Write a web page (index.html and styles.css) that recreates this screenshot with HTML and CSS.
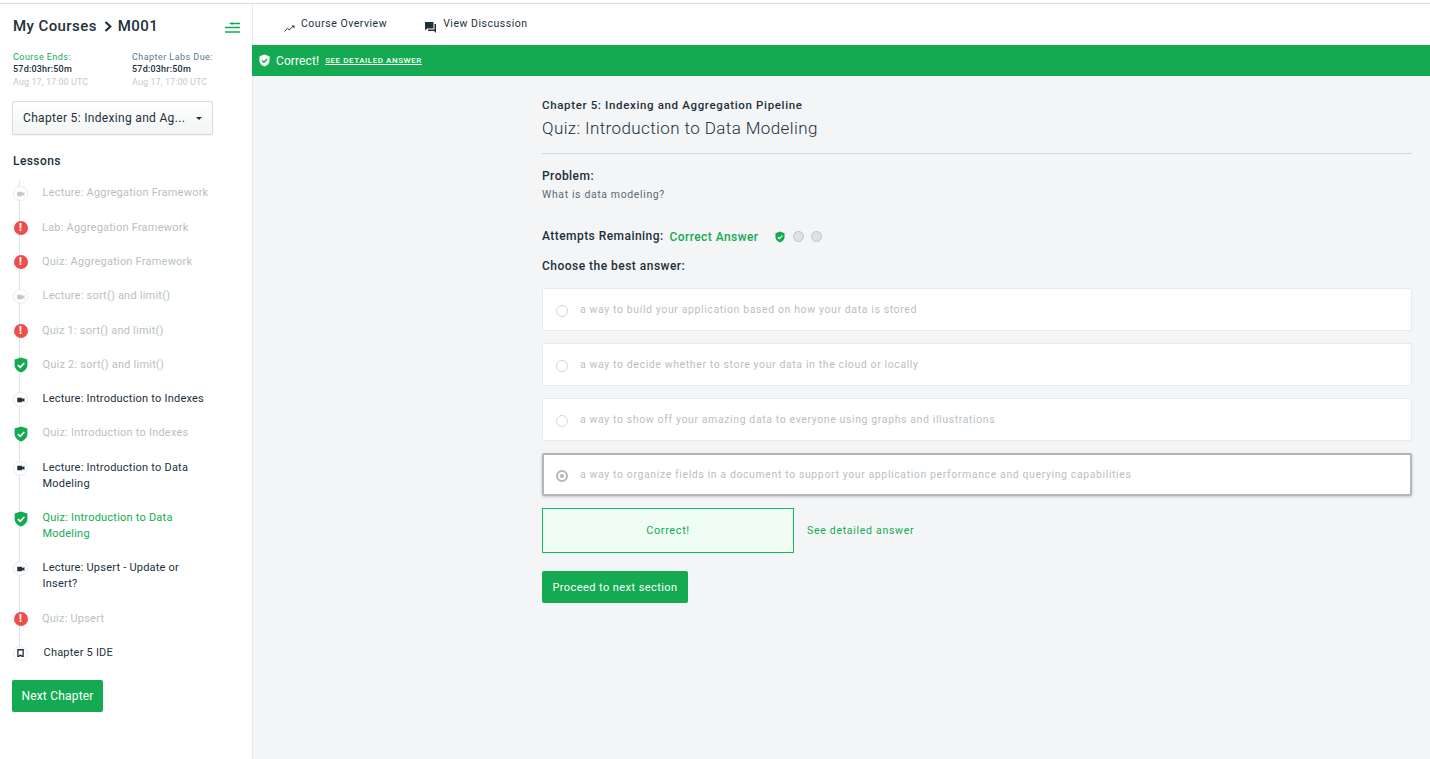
FILE: index.html
```html
<!DOCTYPE html>
<html lang="en">
<head>
<meta charset="utf-8">
<title>Quiz: Introduction to Data Modeling</title>
<link rel="stylesheet" href="styles.css">
</head>
<body>
<svg class="defs" width="0" height="0" aria-hidden="true">
  <defs>
    <symbol id="shield" viewBox="0 0 14 16">
      <path d="M7 .4 13.4 2.600V8c0 3.600-2.700 6.200-6.400 7.600C3.300 14.200.6 11.600.6 8V2.600Z" fill="currentColor"/>
      <path d="M3.900 8.100 6.200 10.300 10.300 6" fill="none" stroke="#fff" stroke-width="1.700"/>
    </symbol>
    <symbol id="video" viewBox="0 0 10 8">
      <path d="M0 1h6.600v2l3-1.600v5.200l-3-1.600v2H0Z" fill="currentColor"/>
    </symbol>
  </defs>
</svg>
<div class="app">
  <aside class="sidebar">
    <div class="crumb-row">
      <h1 class="crumb">My Courses<svg class="chev" width="8" height="11" viewBox="0 0 8 11"><path d="M1.500 1 6.300 5.500 1.500 10" fill="none" stroke="#21313c" stroke-width="2.200"/></svg>M001</h1>
      <svg class="collapse" width="15" height="11" viewBox="0 0 15 11"><path d="M7 1.500h8M0 5.500h15M0 10h15" fill="none" stroke="#13aa52" stroke-width="1.300"/><path d="M4 1.500 7.500 0v3Z" fill="#13aa52"/></svg>
    </div>
    <div class="dates">
      <div class="date-col">
        <div class="date-label green">Course Ends:</div>
        <div class="date-val">57d:03hr:50m</div>
        <div class="date-sub">Aug 17, 17:00 UTC</div>
      </div>
      <div class="date-col">
        <div class="date-label slate">Chapter Labs Due:</div>
        <div class="date-val">57d:03hr:50m</div>
        <div class="date-sub">Aug 17, 17:00 UTC</div>
      </div>
    </div>
    <div class="select">
      <span class="select-text">Chapter 5: Indexing and Ag...</span>
      <span class="caret"></span>
    </div>
    <h2 class="lessons-title">Lessons</h2>
    <ul class="lessons">
      <li class="lesson muted"><span class="node ring"><svg width="8" height="6"><use href="#video"/></svg></span><span class="lesson-text">Lecture: Aggregation Framework</span></li>
      <li class="lesson muted"><span class="node alert">!</span><span class="lesson-text">Lab: Aggregation Framework</span></li>
      <li class="lesson muted"><span class="node alert">!</span><span class="lesson-text">Quiz: Aggregation Framework</span></li>
      <li class="lesson muted"><span class="node ring"><svg width="8" height="6"><use href="#video"/></svg></span><span class="lesson-text">Lecture: sort() and limit()</span></li>
      <li class="lesson muted"><span class="node alert">!</span><span class="lesson-text">Quiz 1: sort() and limit()</span></li>
      <li class="lesson muted"><span class="node pass"><svg width="14" height="16"><use href="#shield"/></svg></span><span class="lesson-text">Quiz 2: sort() and limit()</span></li>
      <li class="lesson"><span class="node ring"><svg width="8" height="6"><use href="#video"/></svg></span><span class="lesson-text">Lecture: Introduction to Indexes</span></li>
      <li class="lesson muted"><span class="node pass"><svg width="14" height="16"><use href="#shield"/></svg></span><span class="lesson-text">Quiz: Introduction to Indexes</span></li>
      <li class="lesson"><span class="node ring"><svg width="8" height="6"><use href="#video"/></svg></span><span class="lesson-text">Lecture: Introduction to Data Modeling</span></li>
      <li class="lesson current"><span class="node pass"><svg width="14" height="16"><use href="#shield"/></svg></span><span class="lesson-text">Quiz: Introduction to Data Modeling</span></li>
      <li class="lesson"><span class="node ring"><svg width="8" height="6"><use href="#video"/></svg></span><span class="lesson-text">Lecture: Upsert - Update or Insert?</span></li>
      <li class="lesson muted"><span class="node alert">!</span><span class="lesson-text">Quiz: Upsert</span></li>
      <li class="lesson last"><span class="node ring"><svg width="7" height="8" viewBox="0 0 8 9"><path d="M1 .8h6v7.400H5.700L4 6.800 2.300 8.200H1Z" fill="none" stroke="currentColor" stroke-width="1.500"/></svg></span><span class="lesson-text ide">Chapter 5 IDE</span></li>
    </ul>
    <button class="btn next">Next Chapter</button>
  </aside>
  <main class="main">
    <nav class="topnav">
      <a class="nav-item"><svg class="nav-ico trend" width="11" height="7" viewBox="0 0 11 7"><path d="M.4 6.400 3.500 3.300 5.300 5 9.300 1" fill="none" stroke="#21313c" stroke-width="1"/><path d="M7.500.5h3v3Z" fill="#21313c"/></svg>Course Overview</a>
      <a class="nav-item"><svg class="nav-ico chat" width="11" height="11" viewBox="0 0 11 11"><path d="M0 0h8.500v6.500H2L0 8.500Z" fill="#21313c"/><path d="M9.500 2H11v9L9 9H3V7.500h6.500Z" fill="#21313c"/></svg>View Discussion</a>
    </nav>
    <div class="banner">
      <svg class="banner-shield" width="11" height="13" viewBox="0 0 14 16"><path d="M7 .4 13.400 2.600V8c0 3.600-2.700 6.200-6.400 7.600C3.300 14.200.6 11.600.6 8V2.600Z" fill="#fff"/><path d="M3.900 8.100 6.200 10.300 10.300 6" fill="none" stroke="#13aa52" stroke-width="1.900"/></svg>
      <span class="banner-text">Correct!</span>
      <a class="banner-link">SEE DETAILED ANSWER</a>
    </div>
    <section class="content">
      <div class="eyebrow">Chapter 5: Indexing and Aggregation Pipeline</div>
      <h2 class="quiz-title">Quiz: Introduction to Data Modeling</h2>
      <hr class="rule">
      <div class="label">Problem:</div>
      <p class="question">What is data modeling?</p>
      <div class="attempts">
        <span class="label">Attempts Remaining:</span>
        <span class="correct-answer">Correct Answer</span>
        <svg class="attempt-shield" width="10" height="12"><use href="#shield"/></svg>
        <span class="dot"></span>
        <span class="dot"></span>
      </div>
      <div class="label choose">Choose the best answer:</div>
      <div class="options">
        <div class="option"><span class="radio"></span><span class="option-text">a way to build your application based on how your data is stored</span></div>
        <div class="option"><span class="radio"></span><span class="option-text">a way to decide whether to store your data in the cloud or locally</span></div>
        <div class="option"><span class="radio"></span><span class="option-text">a way to show off your amazing data to everyone using graphs and illustrations</span></div>
        <div class="option selected"><span class="radio on"></span><span class="option-text">a way to organize fields in a document to support your application performance and querying capabilities</span></div>
      </div>
      <div class="result">
        <div class="result-box">Correct!</div>
        <a class="result-link">See detailed answer</a>
      </div>
      <button class="btn proceed">Proceed to next section</button>
    </section>
  </main>
</div>
</body>
</html>
```
FILE: styles.css
```css
* { box-sizing: border-box; }
html, body { margin: 0; padding: 0; height: 100%; }
body {
  font-family: Roboto, "Liberation Sans", sans-serif;
  color: #21313c;
  background: #fff;
  overflow: hidden;
}
.defs { position: absolute; }
.app {
  display: flex;
  height: 756px;
  margin-top: 3px;
  border-top: 1px solid #dcdcdc;
}
.sidebar {
  width: 252px;
  flex: none;
  padding: 13px 12px 0 13px;
  background: #fff;
}
.crumb-row { display: flex; justify-content: space-between; align-items: flex-start; height: 27px; }
.crumb { margin: 0; font-size: 15px; line-height: 18px; font-weight: 500; letter-spacing: .42px; }
.chev { margin: 0 6px 0 7px; vertical-align: -1px; }
.collapse { margin-top: 5px; }
.dates { display: flex; margin-top: 7px; }
.date-col { width: 119px; flex: none; }
.date-label { font-size: 9px; line-height: 12px; letter-spacing: .45px; font-weight: 400; }
.date-label.green { color: #13aa52; }
.date-label.slate { color: #5d7a8c; }
.date-val { font-size: 9px; line-height: 13px; font-weight: 500; letter-spacing: .2px; color: #21313c; }
.date-sub { font-size: 9px; line-height: 13px; color: #c5cacd; letter-spacing: .09px; }
.select {
  display: flex;
  align-items: center;
  justify-content: space-between;
  width: 201px;
  height: 34px;
  margin: 12px 0 0 -1px;
  padding: 0 10px 0 10px;
  border: 1px solid #d8dbdd;
  border-radius: 2px;
  background: linear-gradient(#fff, #f3f4f4);
  box-shadow: 0 1px 1px rgba(0, 0, 0, .05);
}
.select-text { font-size: 12px; letter-spacing: .32px; white-space: nowrap; }
.caret { width: 0; height: 0; border: 3px solid transparent; border-top-color: #21313c; border-bottom: 0; }
.lessons-title { margin: 17.5px 0 0; font-size: 12px; line-height: 16px; font-weight: 500; letter-spacing: .42px; }
.lessons { list-style: none; margin: 16.9px 0 0; padding: 0; }
.lesson {
  display: flex;
  position: relative;
  min-height: 34.3px;
  padding-bottom: 18.3px;
  font-size: 11px;
  line-height: 16px;
  font-weight: 400;
  letter-spacing: .22px;
}
.lesson::before {
  content: "";
  position: absolute;
  left: 6px;
  top: 0;
  bottom: -2px;
  width: 1px;
  background: #e0e3e4;
}
.lesson.last::before { bottom: 20px; }
.lesson.last { padding-bottom: 0; min-height: 16px; }
.lesson:first-child::before { top: -4px; }
.node {
  position: relative;
  flex: none;
  display: flex;
  align-items: center;
  justify-content: center;
  width: 15px;
  height: 15px;
  margin: 1px 14.5px 0 0;
  border-radius: 50%;
}
.node.ring { background: #fff; border: 1px solid #e7eaec; color: #21313c; }
.muted .node.ring { color: #c2c7c9; }
.node.alert { width: 14px; height: 14px; margin: 1.500px 14.5px 0 .5px; background: #ef4c4c; color: #fff; font-size: 10.500px; font-weight: 900; line-height: 14px; }
.node.pass { color: #13aa52; background: #fff; }
.lesson-text { width: 170px; color: #21313c; }
.lesson-text.ide { margin-left: 1px; }
.muted .lesson-text { color: #b8bfc3; }
.current .lesson-text { color: #13aa52; }
.btn {
  display: block;
  border: 0;
  border-radius: 2px;
  background: #13aa52;
  color: #fff;
  font-family: inherit;
  font-size: 12px;
  letter-spacing: .2px;
  padding: 0;
  height: 32px;
}
.next { width: 91px; margin: 19px 0 0 -1px; }
.main { flex: 1; min-width: 0; display: flex; flex-direction: column; background: #f4f5f7; border-left: 1px solid #e7eaec; }
.topnav { display: flex; height: 41px; background: #fff; padding-left: 31px; }
.nav-item { display: flex; font-size: 10.5px; line-height: 13px; padding-top: 13px; letter-spacing: .52px; margin-right: 38px; }
.nav-ico { margin-right: 6px; flex: none; }
.trend { margin-top: 8px; }
.chat { margin-top: 5px; margin-right: 7px; }
.banner {
  display: flex;
  align-items: center;
  height: 31px;
  margin-left: -1px;
  padding-left: 7px;
  background: #13aa52;
  color: #fff;
}
.banner-shield { margin-right: 6px; }
.banner-text { font-size: 12px; letter-spacing: .1px; }
.banner-link { margin-left: 6px; font-size: 8px; font-weight: 500; text-decoration: underline; letter-spacing: .55px; }
.content { padding: 22px 18px 0 289px; }
.eyebrow { font-size: 11.5px; line-height: 15px; font-weight: 500; letter-spacing: .65px; }
.quiz-title { margin: 4px 0 0; font-size: 17px; line-height: 22px; font-weight: 300; letter-spacing: .4px; color: #21313c; }
.rule { margin: 14px 0 0; border: 0; border-top: 1px solid #d3d8da; }
.label { font-size: 12px; line-height: 15px; font-weight: 500; letter-spacing: .45px; }
.rule + .label { margin-top: 15px; }
.question { margin: 3px 0 0; font-size: 10.5px; line-height: 15px; letter-spacing: .62px; color: #5b6b76; }
.attempts { display: flex; align-items: center; margin-top: 27px; height: 15px; }
.correct-answer { margin-left: 6px; font-size: 12px; font-weight: 500; letter-spacing: .43px; color: #13aa52; }
.attempt-shield { margin-left: 16px; color: #13aa52; }
.dot { width: 11px; height: 11px; margin-left: 7px; border-radius: 50%; background: #dfe2e4; border: 1px solid #bcc3c7; }
.attempt-shield + .dot { margin-left: 8px; }
.choose { margin-top: 15px; letter-spacing: .48px; }
.options { display: flex; flex-direction: column; gap: 12px; margin-top: 14px; }
.option {
  display: flex;
  align-items: center;
  height: 43px;
  padding-left: 13px;
  background: #fff;
  border: 1px solid #e7eaec;
  border-radius: 2px;
  font-size: 10.5px;
  letter-spacing: .61px;
  color: #b8bfc3;
}
.option-text { margin-top: -1px; }
.radio {
  flex: none;
  width: 12px;
  height: 12px;
  margin: 3px 12px 0 0;
  border-radius: 50%;
  border: 1px solid #d3d8da;
  background: #fff;
}
.option.selected { border: 2px solid #b0b8bd; padding-left: 12px; box-shadow: 0 1px 3px rgba(0, 0, 0, .2); }
.radio.on { border: 2px solid #b0b8bd; position: relative; }
.radio.on::after { content: ""; position: absolute; left: 2px; top: 2px; width: 4px; height: 4px; border-radius: 50%; background: #b0b8bd; }
.result { display: flex; align-items: center; margin-top: 12px; }
.result-box {
  width: 252px;
  height: 45px;
  display: flex;
  align-items: center;
  justify-content: center;
  background: #effdf4;
  border: 1px solid #13bb5f;
  color: #13aa52;
  font-size: 11px;
  letter-spacing: .6px;
}
.result-link { margin-left: 13px; font-size: 10.5px; letter-spacing: .71px; color: #13aa52; }
.proceed { width: 146px; margin-top: 18px; font-size: 11px; letter-spacing: .43px; }
```
